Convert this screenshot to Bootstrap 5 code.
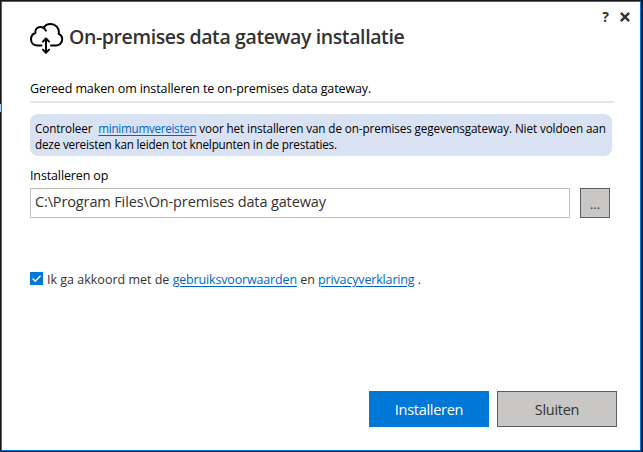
<!DOCTYPE html>
<html lang="nl">
<head>
<meta charset="utf-8">
<meta name="viewport" content="width=device-width, initial-scale=1">
<title>On-premises data gateway installatie</title>
<link href="https://cdn.jsdelivr.net/npm/bootstrap@5.3.0/dist/css/bootstrap.min.css" rel="stylesheet">
<style>
body{background:#171819;font-family:"Open Sans","Noto Sans",sans-serif;font-size:12.5px;color:#000;height:452px;padding:1px 2px 1px 1px}
.dialog-window{height:450px;border:1px solid #0078d7;background:#fff;padding:0 23px 23px 28px}
.edge-mark{left:0;top:104px;width:1px;height:8px;background:#9fd3ee}
.window-tools{top:7px;right:10px;gap:11px}
.tool-btn{border:0;background:none;padding:0;color:#333;font-size:14px;font-weight:700;line-height:15px;display:flex;align-items:center}
.head-row{padding-top:20px;height:54px;gap:5px;margin-left:-1px}
.head-title{font-size:19.5px;font-weight:600;letter-spacing:-.39px;line-height:28px;color:#333;padding-top:1px}
.intro-line{margin-top:23px;line-height:20px;letter-spacing:-.11px}
.rule-line{margin:2px 3px 0 0;height:2px;background:#e6e6e6}
.info-box{margin:11px 5px 0 0;height:42px;padding:6px 0 0 5px;border-radius:8px;background:#d9e2f3;font-size:11.7px;line-height:16px;letter-spacing:-.1px}
.info-box a{margin-left:3px;letter-spacing:-.3px}
.info-second{letter-spacing:-.17px}
a{color:#0066cc}
a:hover{color:#004e9c}
.agree-row a,.info-box a{text-decoration-thickness:1px;text-underline-offset:2px}
.path-label{margin-top:10px;line-height:20px;letter-spacing:-.13px;display:block}
.path-row{margin-top:2px;gap:10px}
.path-field{width:540px;height:30px;border:1px solid #bfbfbf;border-radius:0;padding:0 4px 3px;font-size:14.5px;letter-spacing:-.13px;color:#333;line-height:24px}
.grey-btn{background:#c9c7c5;border:1px solid #605e5c;color:#333}
.browse-btn{width:30px;height:30px;padding:4px 0 0;border-radius:0;font-size:12.5px;line-height:20px}
.agree-row{margin-top:51px;height:20px;color:#333;gap:4px}
.agree-row label{padding-top:2px}
.agree-row .form-check-input{width:13px;height:13px;margin:0;border-radius:0;border:0;flex:none}
.agree-row .form-check-input:checked{background-color:#0078d7;background-image:none}
.check-wrap{width:13px;height:13px;margin-bottom:1px}
.check-wrap svg{left:0;top:0;pointer-events:none}
.agree-row a{font-size:12.5px;letter-spacing:-.16px}
.foot-row{gap:8px;margin-right:0}
.foot-row .btn{width:120px;height:36px;border-radius:0;padding:1px 0 0;font-size:14.5px;letter-spacing:-.28px}
.main-btn{background:#0078d7;border-color:#0078d7;color:#fff}
</style>
<script src="https://cdn.jsdelivr.net/npm/bootstrap@5.3.0/dist/js/bootstrap.bundle.min.js"></script>
</head>
<body class="overflow-hidden position-relative">
<span class="edge-mark position-absolute"></span>
<main class="dialog-window position-relative d-flex flex-column">
  <div class="window-tools position-absolute d-flex align-items-center">
    <button class="tool-btn" type="button" aria-label="Help">?</button>
    <button class="tool-btn" type="button" aria-label="Sluiten">
      <svg width="10" height="10" viewBox="0 0 10 10" fill="none" stroke="#333" stroke-width="2.5"><path d="M.9.9 9.1 9.1M9.1.9.9 9.1"/></svg>
    </button>
  </div>
  <header class="head-row d-flex align-items-start">
    <svg width="35" height="34" viewBox="0 0 35 34" fill="none" stroke="#000" stroke-width="2" stroke-linecap="round" stroke-linejoin="round">
      <path d="M12.500 23.500H8.600C4.600 23.500 2 20.900 2 17.300c0-3.100 1.700-5.400 4.400-6.300C5.700 7.500 8.400 5 11.400 5c1.200 0 2.200.300 3.100.900C16.100 3.300 18.800 2 21.700 2c4.600 0 8.200 3.600 8.200 8 0 .700-.100 1.300-.200 1.900 2.100 1 3.500 3.100 3.500 5.400 0 3.500-2.800 6.200-6.400 6.200h-4.800"/>
      <path d="M14.500 5.900c1.100.700 1.900 1.600 2.400 2.700"/>
      <path d="M17 17v13.500M13.900 19.600 17 16.500l3.100 3.100M13.900 27.600 17 30.700l3.100-3.100"/>
    </svg>
    <h1 class="head-title mb-0 text-nowrap">On-premises data gateway installatie</h1>
  </header>
  <p class="intro-line mb-0 text-nowrap">Gereed maken om installeren te on-premises data gateway.</p>
  <div class="rule-line"></div>
  <div class="info-box text-nowrap">
    <div>Controleer <a href="#">minimumvereisten</a> voor het installeren van de on-premises gegevensgateway. Niet voldoen aan</div>
    <div class="info-second">deze vereisten kan leiden tot knelpunten in de prestaties.</div>
  </div>
  <label class="path-label" for="path">Installeren op</label>
  <div class="path-row d-flex">
    <input class="path-field form-control flex-grow-0" id="path" type="text" value="C:\Program Files\On-premises data gateway">
    <button class="btn grey-btn browse-btn" type="button">...</button>
  </div>
  <div class="agree-row d-flex align-items-center">
    <span class="check-wrap position-relative d-block flex-shrink-0">
      <input class="form-check-input d-block" id="agree" type="checkbox" checked>
      <svg class="position-absolute" width="13" height="13" viewBox="0 0 13 13" fill="none" stroke="#fff" stroke-width="1.4"><path d="M2.600 6.600 5.200 9.200 10.500 3.800"/></svg>
    </span>
    <label for="agree" class="text-nowrap">Ik ga akkoord met de <a href="#">gebruiksvoorwaarden</a> en <a href="#">privacyverklaring</a> .</label>
  </div>
  <footer class="foot-row d-flex justify-content-end mt-auto">
    <button class="btn main-btn" type="button">Installeren</button>
    <button class="btn grey-btn" type="button">Sluiten</button>
  </footer>
</main>
</body>
</html>
